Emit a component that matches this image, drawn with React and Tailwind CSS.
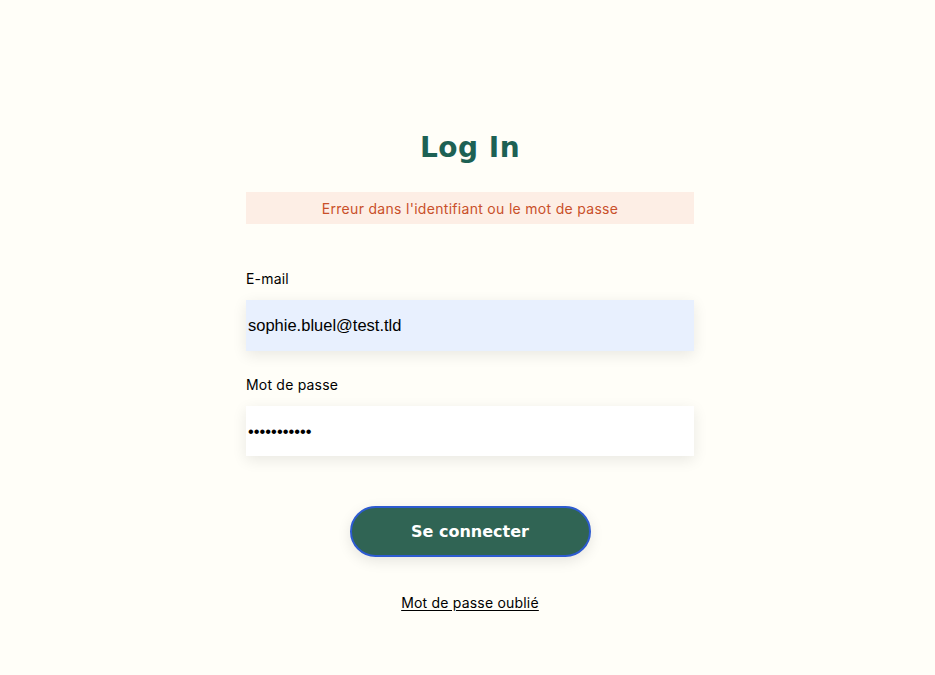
import React, { useState } from "react";

function App() {
  const [email, setEmail] = useState("sophie.bluel@test.tld");
  const [password, setPassword] = useState("azertyuiopq");

  return (
    <div className="flex min-h-[675px] w-full justify-center bg-[#FFFEF8] pl-[5px] font-['Inter',sans-serif]">
      <section className="flex w-[448px] flex-col items-center pt-[128px]">
        <h2 className="font-['DejaVu_Sans',sans-serif] text-[28px] leading-[40px] font-bold tracking-[0.5px] text-[#1D6154]">
          Log In
        </h2>

        <p className="mt-[24px] flex h-[32px] w-full items-center justify-center bg-[#FDEEE5] text-[14px] tracking-[0.3px] text-[#C9502A]">
          Erreur dans l'identifiant ou le mot de passe
        </p>

        <form className="mt-[45px] flex w-full flex-col" onSubmit={(e) => e.preventDefault()}>
          <label htmlFor="email" className="text-[14px] leading-[20px] tracking-[0.2px] text-black">
            E-mail
          </label>
          <input
            id="email"
            type="email"
            value={email}
            onChange={(e) => setEmail(e.target.value)}
            className="mt-[11px] h-[51px] w-full bg-[#E8F0FE] px-[2px] font-['Liberation_Sans',sans-serif] text-[16.5px] text-black shadow-[0_4px_14px_rgba(0,0,0,0.09)] outline-none"
          />

          <label htmlFor="password" className="mt-[24px] text-[14px] leading-[20px] tracking-[0.2px] text-black">
            Mot de passe
          </label>
          <input
            id="password"
            type="password"
            value={password}
            onChange={(e) => setPassword(e.target.value)}
            className="mt-[11px] h-[50px] w-full bg-white px-[2px] font-['Liberation_Sans',sans-serif] text-[16.5px] text-black shadow-[0_4px_14px_rgba(0,0,0,0.09)] outline-none"
          />

          <button
            type="submit"
            className="mx-auto mt-[50px] h-[51px] w-[241px] rounded-full border-2 border-[#2D5BD0] bg-[#306454] font-['DejaVu_Sans',sans-serif] text-[16px] font-bold text-white shadow-[0_4px_14px_rgba(0,0,0,0.1)]"
          >
            Se connecter
          </button>
        </form>

        <a href="#" className="mt-[35px] text-[14px] tracking-[0.2px] text-black underline underline-offset-2">
          Mot de passe oublié
        </a>
      </section>
    </div>
  );
}

export default App;
